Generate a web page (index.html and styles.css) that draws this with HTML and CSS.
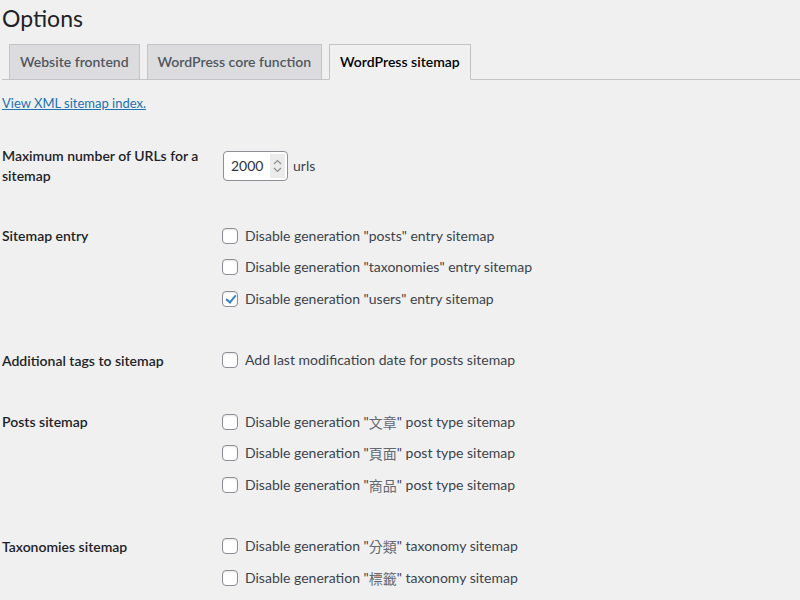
FILE: index.html
```html
<!DOCTYPE html>
<html lang="en">
<head>
<meta charset="utf-8">
<title>Options</title>
<link rel="stylesheet" href="styles.css">
</head>
<body>
<div class="wrap">
  <h1 class="title">Options</h1>
  <nav class="tabs">
    <a class="tab" href="#">Website frontend</a>
    <a class="tab" href="#">WordPress core function</a>
    <a class="tab active" href="#">WordPress sitemap</a>
  </nav>
  <p class="intro"><a href="#">View XML sitemap index.</a></p>
  <table class="form-table">
    <tbody>
      <tr>
        <th>Maximum number of URLs for a sitemap</th>
        <td class="mid">
          <div class="num-row">
            <div class="num"><span class="num-val">2000</span><span class="spin"><svg width="9" height="14" viewBox="0 0 9 14"><path d="M1 5 L4.5 1.5 L8 5" fill="none" stroke="#8c8f94" stroke-width="1.2"/><path d="M1 9 L4.5 12.5 L8 9" fill="none" stroke="#8c8f94" stroke-width="1.2"/></svg></span></div>
            <span class="unit">urls</span>
          </div>
        </td>
      </tr>
      <tr>
        <th>Sitemap entry</th>
        <td>
          <fieldset>
            <label><input type="checkbox"> Disable generation "posts" entry sitemap</label>
            <label><input type="checkbox"> Disable generation "taxonomies" entry sitemap</label>
            <label><input type="checkbox" checked> Disable generation "users" entry sitemap</label>
          </fieldset>
        </td>
      </tr>
      <tr>
        <th>Additional tags to sitemap</th>
        <td>
          <fieldset>
            <label><input type="checkbox"> Add last modification date for posts sitemap</label>
          </fieldset>
        </td>
      </tr>
      <tr>
        <th>Posts sitemap</th>
        <td>
          <fieldset>
            <label><input type="checkbox"> Disable generation "<span class="cjk">文章</span>" post type sitemap</label>
            <label><input type="checkbox"> Disable generation "<span class="cjk">頁面</span>" post type sitemap</label>
            <label><input type="checkbox"> Disable generation "<span class="cjk">商品</span>" post type sitemap</label>
          </fieldset>
        </td>
      </tr>
      <tr>
        <th>Taxonomies sitemap</th>
        <td>
          <fieldset>
            <label><input type="checkbox"> Disable generation "<span class="cjk">分類</span>" taxonomy sitemap</label>
            <label><input type="checkbox"> Disable generation "<span class="cjk">標籤</span>" taxonomy sitemap</label>
          </fieldset>
        </td>
      </tr>
    </tbody>
  </table>
</div>
</body>
</html>
```
FILE: styles.css
```css
html, body {
  margin: 0;
  padding: 0;
  background: #f0f0f1;
}
body {
  font-family: Lato, "Noto Sans CJK TC", sans-serif;
  font-size: 13px;
  color: #3c434a;
}
.wrap {
  padding-left: 2px;
}
.title {
  margin: 0;
  padding: 3px 0 2px;
  font-size: 23px;
  font-weight: 400;
  line-height: 30px;
  color: #1d2327;
}
.tabs {
  display: flex;
  padding-top: 9px;
  border-bottom: 1px solid #c3c4c7;
}
.tab {
  margin-left: 7px;
  margin-bottom: -1px;
  padding: 5px 10px;
  border: 1px solid #c3c4c7;
  background: #dcdcde;
  color: #50575e;
  font-size: 14px;
  font-weight: 600;
  line-height: 24px;
  text-decoration: none;
}
.tab.active {
  background: #f0f0f1;
  color: #000;
  border-bottom-color: #f0f0f1;
}
.intro {
  margin: 13px 0;
  line-height: 20px;
}
.intro a {
  color: #2271b1;
}
.form-table {
  border-collapse: collapse;
  margin-top: 7px;
  font-size: 14px;
}
.form-table th {
  width: 200px;
  padding: 20px 10px 20px 0;
  text-align: left;
  vertical-align: top;
  font-weight: 600;
  line-height: 20px;
  color: #1d2327;
}
.form-table td {
  padding: 15px 10px;
  vertical-align: top;
  line-height: 20px;
}
.form-table td.mid {
  vertical-align: middle;
}
fieldset {
  margin: 0;
  padding: 0;
  border: 0;
  display: flex;
  flex-direction: column;
  align-items: flex-start;
}
label {
  display: flex;
  align-items: center;
  margin: 4.5px 0 7px;
}
.cjk {
  font-family: "Noto Sans CJK TC", sans-serif;
  color: #646970;
}
input[type="checkbox"] {
  appearance: none;
  -webkit-appearance: none;
  position: relative;
  width: 16px;
  height: 16px;
  margin: 0 7px 0 0;
  border: 1px solid #8c8f94;
  border-radius: 4px;
  background: #fff;
  box-shadow: inset 0 1px 2px rgba(0,0,0,.1);
}
input[type="checkbox"]:checked::before {
  content: "";
  position: absolute;
  left: 4.5px;
  top: 1px;
  width: 4px;
  height: 8px;
  border-right: 2px solid #3582c4;
  border-bottom: 2px solid #3582c4;
  transform: rotate(40deg);
}
.num-row {
  display: flex;
  align-items: center;
  gap: 5px;
}
.num {
  display: flex;
  align-items: center;
  height: 28px;
  margin-left: 1px;
  padding: 0 2px 0 7px;
  border: 1px solid #8c8f94;
  border-radius: 4px;
  background: #fff;
  color: #2c3338;
}
.num-val {
  width: 39px;
}
.spin {
  display: flex;
  align-items: center;
  justify-content: center;
  width: 15px;
  height: 24px;
  background: #ebebeb;
}
.unit {
  color: #3c434a;
}
```
